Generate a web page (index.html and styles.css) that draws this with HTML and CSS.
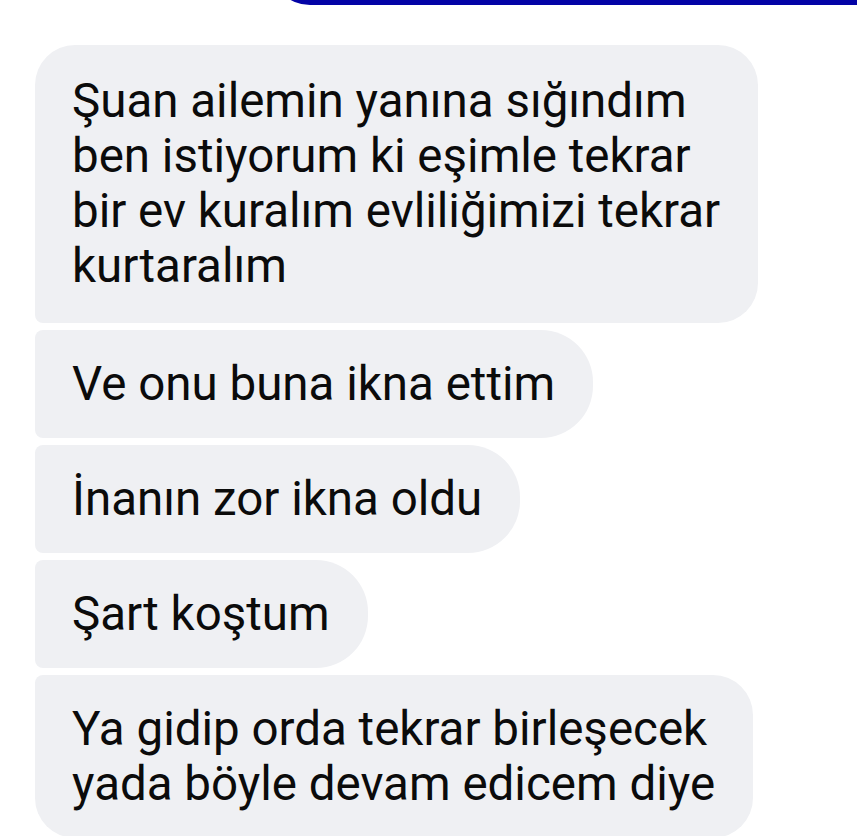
FILE: index.html
```html
<!DOCTYPE html>
<html lang="tr">
<head>
  <meta charset="UTF-8" />
  <meta name="viewport" content="width=device-width, initial-scale=1" />
  <title>Mesajlar</title>
  <link rel="stylesheet" href="styles.css">
</head>
<body>
  <div class="thread">
    <div class="sent"></div>

    <div class="bubble first">Şuan ailemin yanına sığındım<br>ben istiyorum ki eşimle tekrar<br>bir ev kuralım evliliğimizi tekrar<br>kurtaralım</div>
    <div class="bubble">Ve onu buna ikna ettim</div>
    <div class="bubble">İnanın zor ikna oldu</div>
    <div class="bubble">Şart koştum</div>
    <div class="bubble last">Ya gidip orda tekrar birleşecek<br>yada böyle devam edicem diye</div>
  </div>
</body>
</html>
```

FILE: styles.css
```css
* {
  box-sizing: border-box;
}
body {
  margin: 0;
  background: #fff;
  font-family: Roboto, 'Noto Sans', sans-serif;
  color: #0b0b0b;
  overflow: hidden;
}
.thread {
  display: flex;
  flex-direction: column;
  align-items: flex-start;
  gap: 7px;
  padding-left: 35px;
}
.sent {
  align-self: stretch;
  height: 60px;
  margin: -55px 0 33px 235px;
  background: #0303a6;
  border-radius: 0 0 0 40px;
}
.bubble {
  background: #eff0f3;
  font-size: 47.5px;
  line-height: 55px;
  padding: 27px 38px 26px 37px;
  border-radius: 8px 52px 52px 8px;
}
.bubble.first {
  padding-top: 29px;
  padding-bottom: 29px;
  border-radius: 40px 40px 40px 8px;
}
.bubble.last {
  border-radius: 8px 40px 40px 40px;
}
```
